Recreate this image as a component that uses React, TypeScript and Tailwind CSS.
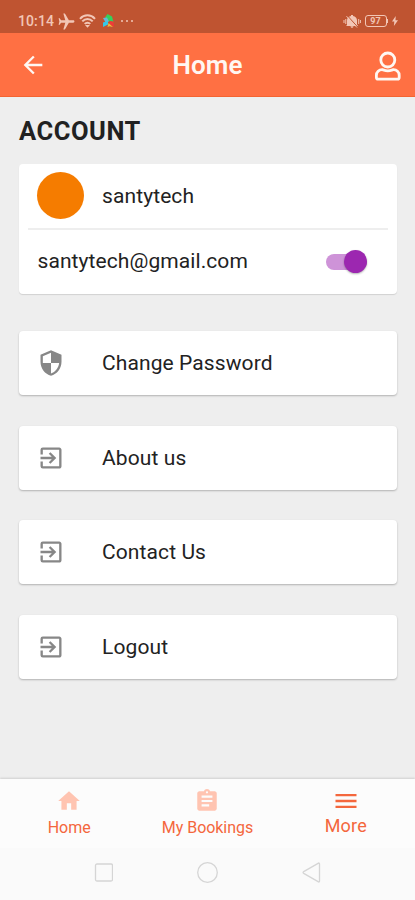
import type { ReactNode } from "react";
import {
  MdAirplanemodeActive,
  MdArrowBack,
  MdAssignment,
  MdExitToApp,
  MdHome,
  MdMenu,
  MdSecurity,
} from "react-icons/md";

function StatusBar() {
  return (
    <div className="flex h-[33px] items-center bg-[#bf5431] pt-[9px] pl-[18px] pr-[17px] text-[#f2c6b6]">
      <span className="w-[36px] text-[14px] leading-[16px] font-medium tracking-[0.1px]">10:14</span>
      <MdAirplanemodeActive className="ml-[3px] size-[19px] rotate-90" />
      <svg className="ml-[3px] h-[14px] w-[17px]" viewBox="0 0 17 14" fill="none" stroke="currentColor" strokeWidth="2">
        <path d="M1 4.8C5.2.2 11.8.2 16 4.8M3.3 7.4c3-3.2 7.4-3.2 10.4 0M5.7 9.9c1.6-1.7 4-1.7 5.6 0" />
        <path d="M6 11h5l-2.500 2.800z" fill="currentColor" stroke="none" />
      </svg>
      <svg className="ml-[6px] h-[14px] w-[13px]" viewBox="0 0 13 14">
        <path d="M5.500 0l4.500 2.500 1.500 5.500L6 7 3 3.500z" fill="#35d05c" />
        <path d="M1 4l4-.5L7 7.500 3.500 8.500z" fill="#64b8d8" />
        <path d="M1 8.500l5-1.500v3.500L1 13z" fill="#35c8e8" />
        <path d="M7.500 7l4 .5.5 5.500-4-2.500z" fill="#f03b38" />
        <path d="M6.500 9l4.500 4-3.500-.8-2 .8z" fill="#f2b83b" />
      </svg>
      <span className="ml-[6px] flex gap-[3px]">
        <i className="size-[2px] rounded-full bg-current" />
        <i className="size-[2px] rounded-full bg-current" />
        <i className="size-[2px] rounded-full bg-current" />
      </span>
      <svg className="ml-auto h-[15px] w-[18px]" viewBox="0 0 18 15" fill="currentColor">
        <path d="M4 11V6.500C4 4 5.700 2.300 8 2V1h2v1c2.300.3 4 2 4 4.500v4l1.200 1.500H3zM7.500 12.300h3c-.3 2-2.700 2-3 0z" />
        <path d="M1 6v3M2.800 5v5M15.700 5v5M17.400 6v3" stroke="currentColor" />
        <path d="M4.500 1.800l10 11" stroke="#bf5431" strokeWidth="1" />
        <path d="M3.500 2.200l10.500 11.300" stroke="currentColor" strokeWidth="1" />
      </svg>
      <div className="ml-[4px] flex h-[12px] w-[22px] items-center justify-center rounded-[3px] border border-current text-[9px] leading-[9px] font-bold">
        97
      </div>
      <i className="h-[4px] w-[1.500px] bg-current" />
      <svg className="ml-[4px] h-[10px] w-[6px]" viewBox="0 0 6 10" fill="currentColor">
        <path d="M3.700 0L0 5.500h2.300L1.900 10 6 4.200H3.500z" />
      </svg>
    </div>
  );
}

function Header() {
  return (
    <header className="grid h-[64px] grid-cols-[1fr_auto_1fr] items-center border-b border-[#f36432] bg-[#ff7043] pr-[14px] pl-[14px] text-[#fff7f2]">
      <MdArrowBack className="ml-[5px] size-[28px]" />
      <h1 className="text-[26px] leading-[30px] font-semibold tracking-[0.1px]">Home</h1>
      <svg className="mt-[2px] h-[30px] w-[26px] justify-self-end" viewBox="0 0 26 30" fill="none" stroke="currentColor" strokeWidth="2.800">
        <circle cx="12.800" cy="9" r="7" />
        <path d="M7.500 18.700c2 .6 3.500 1.100 5.300 1.100s3.300-.5 5.300-1.100c3.600-.2 6.100 2.300 6.100 5.500v2.300c0 1-.7 1.700-1.700 1.700H3.100c-1 0-1.700-.7-1.700-1.700v-2.300c0-3.200 2.500-5.700 6.100-5.500z" />
      </svg>
    </header>
  );
}

function Card({ icon, label }: { icon: ReactNode; label: string }) {
  return (
    <button className="flex h-[64px] w-full items-center rounded-[4px] bg-white pl-[18px] text-left text-[#222] shadow-[0_1px_2px_rgba(0,0,0,0.26)]">
      <span className="w-[65px] text-[#878787]">{icon}</span>
      <span className="text-[21px] leading-[26px] tracking-[0.1px]">{label}</span>
    </button>
  );
}

function Tab({ icon, label, active = false }: { icon: ReactNode; label: string; active?: boolean }) {
  return (
    <div className="flex flex-1 flex-col items-center pt-[9px] text-[#f4673d]">
      <span className={active ? "-mt-px h-[28px]" : "h-[26px] text-[#ffc4b1]"}>{icon}</span>
      <span className={active ? "text-[18px] leading-[22px] tracking-[0.2px]" : "pt-[3px] text-[16px] leading-[22px] tracking-[-0.05px]"}>
        {label}
      </span>
    </div>
  );
}

export default function App() {
  return (
    <div className="flex h-[900px] w-full flex-col overflow-hidden bg-[#eeeeee] font-['Roboto',sans-serif]">
      <StatusBar />
      <Header />
      <main className="flex-1 pt-[18px] pr-[18.500px] pl-[19px]">
        <h2 className="text-[25.500px] leading-[32px] font-bold tracking-[0.550px] text-[#212121]">ACCOUNT</h2>
        <section className="mt-[16.500px] h-[130px] rounded-[4px] bg-white px-[9px] text-[21px] text-[#222] shadow-[0_1px_1px_rgba(0,0,0,0.12)]">
          <div className="flex h-[66px] items-center border-b-2 border-[#eeeeee] pl-[9px]">
            <i className="size-[46.500px] rounded-full bg-[#f57c00]" />
            <span className="ml-[18.500px] pt-[2px] tracking-[0.1px]">santytech</span>
          </div>
          <div className="flex h-[64px] items-center justify-between pr-[20.500px] pl-[9.500px]">
            <span className="tracking-[0.08px]">santytech@gmail.com</span>
            <div className="flex h-[16px] w-[41px] items-center justify-end rounded-full bg-[#ce93d8]">
              <i className="size-[23px] shrink-0 rounded-full bg-[#9c27b0] shadow-[0_1px_2px_rgba(0,0,0,0.3)]" />
            </div>
          </div>
        </section>
        <div className="mt-[37.500px] flex flex-col gap-[30.500px]">
          <Card icon={<MdSecurity className="size-[28px]" />} label="Change Password" />
          <Card icon={<MdExitToApp className="size-[28px]" />} label="About us" />
          <Card icon={<MdExitToApp className="size-[28px]" />} label="Contact Us" />
          <Card icon={<MdExitToApp className="size-[28px]" />} label="Logout" />
        </div>
      </main>
      <nav className="flex h-[69px] bg-[#fcfcfc] shadow-[0_-1px_2px_rgba(0,0,0,0.13)]">
        <Tab icon={<MdHome className="size-[26px]" />} label="Home" />
        <Tab icon={<MdAssignment className="size-[26px]" />} label="My Bookings" />
        <Tab icon={<MdMenu className="size-[28px]" />} label="More" active />
      </nav>
      <div className="flex h-[52px] justify-center gap-[84px] bg-[#fafafa] pt-[13px]">
        <svg className="h-[23px] w-[19px]" viewBox="0 0 19 23" fill="none" stroke="#d5d5d5" strokeWidth="1.300">
          <rect x="1.500" y="3" width="17" height="17" rx="1.500" />
        </svg>
        <svg className="h-[23px] w-[21px]" viewBox="0 0 21 23" fill="none" stroke="#d5d5d5" strokeWidth="1.300">
          <circle cx="10.500" cy="11.500" r="9.800" />
        </svg>
        <svg className="h-[23px] w-[19px]" viewBox="0 0 19 23" fill="none" stroke="#d5d5d5" strokeWidth="1.300">
          <path d="M16.500 2.100L1.700 10.600q-1.300.9 0 1.800l14.800 8.500q1 .4 1-1v-16.800q0-1.400-1-1z" />
        </svg>
      </div>
    </div>
  );
}
